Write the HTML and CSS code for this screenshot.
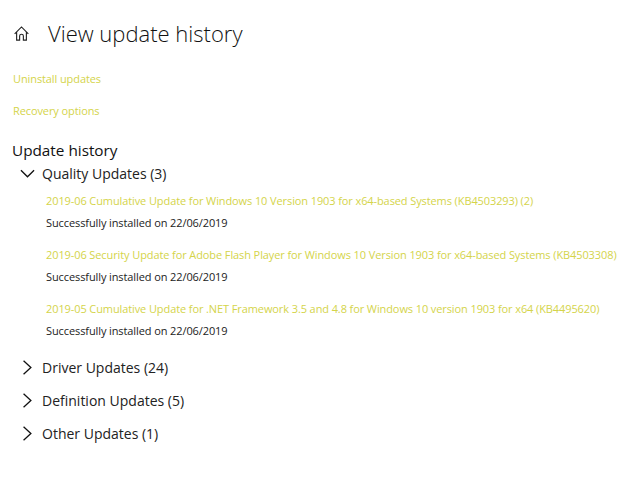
FILE: index.html
```html
<!DOCTYPE html>
<html lang="en">
  <head>
    <meta charset="UTF-8" />
    <title>View update history</title>
    <link rel="stylesheet" href="styles.css">
  </head>
  <body>
    <div class="header">
      <svg class="home-icon" viewBox="0 0 16 16" width="16" height="16">
        <path d="M0.7 8.4 L8 1 L15.3 8.4 M2.8 6.4 V15 H6 V10.6 Q6 8.8 8 8.8 Q10 8.8 10 10.6 V15 H13.2 V6.4" />
      </svg>
      <h1>View update history</h1>
    </div>

    <div class="links">
      <a class="link">Uninstall updates</a>
      <a class="link">Recovery options</a>
    </div>

    <h2>Update history</h2>

    <!-- Expanded group -->
    <div class="group open">
      <svg class="chevron" viewBox="0 0 16 16" width="16" height="16"><path d="M1 4.5 L8 11.5 L15 4.5" /></svg>
      <span>Quality Updates (3)</span>
    </div>

    <div class="updates">
      <div class="update">
        <a class="link">2019-06 Cumulative Update for Windows 10 Version 1903 for x64-based Systems (KB4503293) (2)</a>
        <div class="status">Successfully installed on 22/06/2019</div>
      </div>
      <div class="update">
        <a class="link">2019-06 Security Update for Adobe Flash Player for Windows 10 Version 1903 for x64-based Systems (KB4503308)</a>
        <div class="status">Successfully installed on 22/06/2019</div>
      </div>
      <div class="update">
        <a class="link">2019-05 Cumulative Update for .NET Framework 3.5 and 4.8 for Windows 10 version 1903 for x64 (KB4495620)</a>
        <div class="status">Successfully installed on 22/06/2019</div>
      </div>
    </div>

    <!-- Collapsed groups -->
    <div class="closed-groups">
      <div class="group">
        <svg class="chevron" viewBox="0 0 16 16" width="16" height="16"><path d="M3.8 0.8 L11.6 8 L3.8 15.2" /></svg>
        <span>Driver Updates (24)</span>
      </div>
      <div class="group">
        <svg class="chevron" viewBox="0 0 16 16" width="16" height="16"><path d="M3.8 0.8 L11.6 8 L3.8 15.2" /></svg>
        <span>Definition Updates (5)</span>
      </div>
      <div class="group">
        <svg class="chevron" viewBox="0 0 16 16" width="16" height="16"><path d="M3.8 0.8 L11.6 8 L3.8 15.2" /></svg>
        <span>Other Updates (1)</span>
      </div>
    </div>
  </body>
</html>
```

FILE: styles.css
```css
body {
  margin: 0;
  padding: 0 0 0 12px;
  background: #fff;
  color: #1a1a1a;
  font-family: "Open Sans", sans-serif;
}

.header {
  display: flex;
  align-items: center;
  height: 34px;
  margin-top: 16px;
  padding-left: 2px;
}

.home-icon {
  flex: none;
  width: 15px;
  height: 15px;
  fill: none;
  stroke: #222;
  stroke-width: 1.2;
}

h1 {
  margin: 0 0 0 19px;
  font-size: 22px;
  font-weight: 300;
  line-height: 34px;
  color: #111;
}

.links {
  display: flex;
  flex-direction: column;
  align-items: flex-start;
  gap: 14px;
  margin: 20px 0 0 1px;
}

.link {
  display: block;
  font-size: 11px;
  letter-spacing: -0.1px;
  line-height: 18px;
  white-space: nowrap;
  color: #d4d44a;
}

h2 {
  margin: 19px 0 0;
  font-size: 15.3px;
  font-weight: 400;
  line-height: 23px;
  color: #111;
}

.group {
  display: flex;
  align-items: center;
  height: 22px;
  padding-left: 8px;
  font-size: 14px;
  color: #222;
}

.chevron {
  flex: none;
  width: 15px;
  height: 15px;
  margin-right: 7px;
  fill: none;
  stroke: #111;
  stroke-width: 1.4;
}

.updates {
  display: flex;
  flex-direction: column;
  gap: 14px;
  margin: 8px 0 0 34px;
}

.update {
  display: flex;
  flex-direction: column;
  gap: 4px;
}

.status {
  font-size: 11px;
  letter-spacing: -0.1px;
  line-height: 18px;
  color: #222;
}

.closed-groups {
  display: flex;
  flex-direction: column;
  gap: 11px;
  margin-top: 16px;
}
```
